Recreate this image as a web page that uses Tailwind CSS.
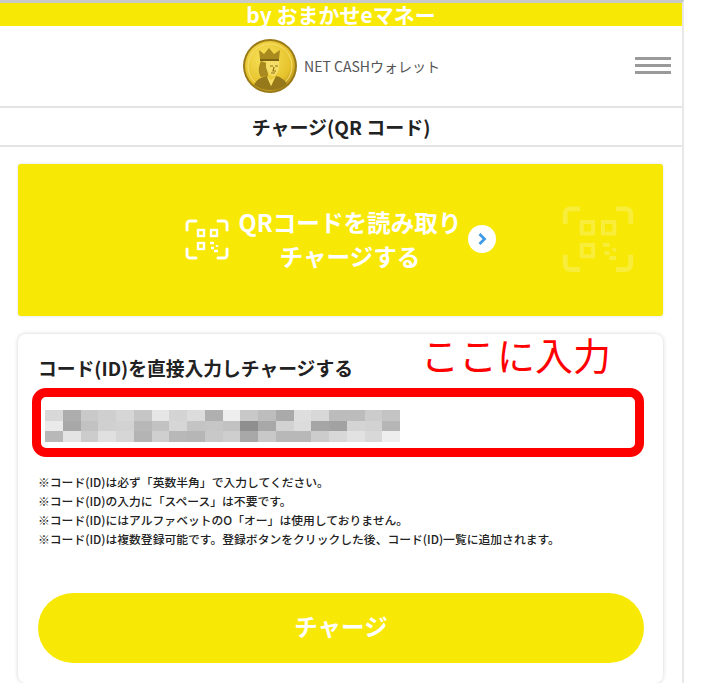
<!DOCTYPE html>
<html lang="ja">
<head>
<meta charset="utf-8">
<script src="https://cdn.jsdelivr.net/npm/@tailwindcss/browser@4"></script>
</head>
<body class="bg-white font-['Noto_Sans_CJK_JP','Noto_Sans',sans-serif] overflow-hidden">
<div class="relative w-[728px] h-[683px] overflow-hidden">
  <div class="w-[684px] h-[683px] border-r-2 border-[#e8e8e8] flex flex-col border-t-[3px] border-t-[#c8c8c8]">
    <div class="h-[23px] bg-[#f8e805] flex items-center justify-center text-white font-bold text-[21px] leading-none">by おまかせeマネー</div>
    <header class="h-[82px] flex items-center relative border-b-2 border-[#e4e4e4] shrink-0">
      <div class="flex-1 flex items-center justify-center gap-[7px] pl-[1px]">
        <svg width="54" height="54" viewBox="0 0 54 54">
          <defs><radialGradient id="g" cx="40%" cy="35%" r="70%"><stop offset="0" stop-color="#f8e35a"/><stop offset="0.75" stop-color="#e6c22c"/><stop offset="1" stop-color="#b8921c"/></radialGradient></defs>
          <circle cx="27" cy="27" r="27" fill="#9a7a18"/>
          <circle cx="27" cy="27" r="25" fill="url(#g)"/>
          <circle cx="27" cy="27" r="22" fill="none" stroke="#f6e070" stroke-width="1"/>
          <path d="M17 20 L16 11 L21 15 L26 9 L31 15 L37 11 L36 20 Z" fill="#a98a1e"/>
          <path d="M17 20 H36 V22 H17 Z" fill="#7f6512"/>
          <path d="M18 22 C15 28 15 34 18 38 L25 37 L24 24 Z" fill="#a88a20"/>
          <path d="M23 22 H36 C37 29 35 35 31 37 C27 37 24 33 23 28 Z" fill="#f5de68"/>
          <path d="M27 27 h3 M32 27 h3 M31 28 l-1 4 h3 M28 34 h4" stroke="#8d7014" stroke-width="1.1" fill="none"/>
          <path d="M11 46 C13 41 18 38 24 37 L28 47 L33 37 C38 38 42 41 44 45 C40 49 34 51 27 51 C21 51 15 49 11 46 Z" fill="#96791a"/>
          <path d="M24 38 L28 47 L32 38 L28 41 Z" fill="#f5de68"/>
        </svg>
        <span class="text-[14px] leading-none text-[#555]">NET CASHウォレット</span>
      </div>
      <div class="absolute left-[635px] top-[31px] w-[36px] flex flex-col gap-[4px]">
        <div class="h-[3px] bg-[#9a9a9a]"></div>
        <div class="h-[3px] bg-[#9a9a9a]"></div>
        <div class="h-[3px] bg-[#9a9a9a]"></div>
      </div>
    </header>
    <div class="h-[39px] flex items-center justify-center border-b-2 border-[#e4e4e4] font-bold text-[19px] leading-none text-[#222] shrink-0">チャージ(QR コード)</div>

    <main class="px-[18px] pt-[17px] pr-[19px] flex flex-col gap-[18px]">
      <div class="relative h-[152px] bg-[#f8e805] rounded-[3px] flex items-center shadow-[0_0_3px_rgba(0,0,0,0.12)] pl-[167px] overflow-hidden">
        <svg width="44" height="44" viewBox="0 0 44 44" fill="none" stroke="#fff" stroke-width="3" class="shrink-0 mt-[-1px]">
          <path d="M2 12V6a3 3 0 0 1 3-3h6M33 3h6a3 3 0 0 1 3 3v6M2 31v6a3 3 0 0 0 3 3h6M42 31v6a3 3 0 0 1-3 3h-6" stroke-linecap="round"/>
          <rect x="13" y="12" width="6" height="6" stroke-width="2.4"/>
          <rect x="26" y="12" width="6" height="6" stroke-width="2.4"/>
          <rect x="13" y="25" width="6" height="6" stroke-width="2.4"/>
          <path d="M25 25h4M32 27v2M26 30h3M29 33h4" stroke-width="2.4"/>
        </svg>
        <div class="w-[228px] ml-[7px] mt-[-3px] text-center text-white font-bold text-[23.6px] leading-[34px] shrink-0">
          <div>QRコードを読み取り</div><div>チャージする</div>
        </div>
        <div class="ml-[4px] w-[28px] h-[28px] rounded-full bg-white flex items-center justify-center shrink-0 mt-[-3px]">
          <svg width="10" height="14" viewBox="0 0 10 14" fill="none" stroke="#3f9be6" stroke-width="2.8"><path d="M2.5 2 L7.5 7 L2.5 12"/></svg>
        </div>
        <svg width="72" height="72" viewBox="0 0 44 44" fill="none" stroke="#fff" stroke-opacity="0.22" stroke-width="3" class="absolute left-[544px] top-[40px]">
          <path d="M2 12V6a3 3 0 0 1 3-3h6M33 3h6a3 3 0 0 1 3 3v6M2 31v6a3 3 0 0 0 3 3h6M42 31v6a3 3 0 0 1-3 3h-6"/>
          <rect x="12" y="11" width="7" height="7" stroke-width="2.4"/>
          <rect x="25" y="11" width="7" height="7" stroke-width="2.4"/>
          <rect x="12" y="25" width="7" height="7" stroke-width="2.4"/>
          <path d="M25 25h4M32 27v2M26 30h3M29 33h4" stroke-width="2.4"/>
        </svg>
      </div>

      <section class="relative h-[349px] bg-white rounded-[8px] shadow-[0_0_4px_rgba(0,0,0,0.18)] px-[20px] pt-[21px] flex flex-col">
        <h2 class="font-bold text-[18.8px] leading-[26px] text-[#222]">コード(ID)を直接入力しチャージする</h2>
        <div class="absolute left-[14px] top-[54px] w-[612px] h-[69px] border-[9px] border-[#ff0000] rounded-[14px] bg-white"></div>
        <div class="relative mt-[29px] ml-[7px] w-[355px] h-[32px] grid grid-cols-[repeat(20,1fr)] grid-rows-3 blur-[0.4px]">
          <div class="bg-[#d8d8d8]"></div><div class="bg-[#adadad]"></div><div class="bg-[#c9c9c9]"></div><div class="bg-[#cfcfcf]"></div><div class="bg-[#d6d6d6]"></div><div class="bg-[#c6c6c6]"></div><div class="bg-[#e6e6e6]"></div><div class="bg-[#d4d4d4]"></div><div class="bg-[#dcdcdc]"></div><div class="bg-[#b0b0b0]"></div><div class="bg-[#eeeeee]"></div><div class="bg-[#c8c8c8]"></div><div class="bg-[#bdbdbd]"></div><div class="bg-[#aaaaaa]"></div><div class="bg-[#dedede]"></div><div class="bg-[#d8d8d8]"></div><div class="bg-[#bcbcbc]"></div><div class="bg-[#bcbcbc]"></div><div class="bg-[#cccccc]"></div><div class="bg-[#c4c4c4]"></div>
          <div class="bg-[#eaeaea]"></div><div class="bg-[#a8a8a8]"></div><div class="bg-[#c2c2c2]"></div><div class="bg-[#d0d0d0]"></div><div class="bg-[#d2d2d2]"></div><div class="bg-[#b8b8b8]"></div><div class="bg-[#c2c2c2]"></div><div class="bg-[#d6d6d6]"></div><div class="bg-[#c4c4c4]"></div><div class="bg-[#c6c6c6]"></div><div class="bg-[#c2c2c2]"></div><div class="bg-[#8f8f8f]"></div><div class="bg-[#a8a8a8]"></div><div class="bg-[#d2d2d2]"></div><div class="bg-[#dcdcdc]"></div><div class="bg-[#a6a6a6]"></div><div class="bg-[#a2a2a2]"></div><div class="bg-[#d4d4d4]"></div><div class="bg-[#d2d2d2]"></div><div class="bg-[#b6b6b6]"></div>
          <div class="bg-[#b8b8b8]"></div><div class="bg-[#e4e4e4]"></div><div class="bg-[#cccccc]"></div><div class="bg-[#e0e0e0]"></div><div class="bg-[#d6d6d6]"></div><div class="bg-[#b4b4b4]"></div><div class="bg-[#cfcfcf]"></div><div class="bg-[#b8b8b8]"></div><div class="bg-[#b6b6b6]"></div><div class="bg-[#c8c8c8]"></div><div class="bg-[#cecece]"></div><div class="bg-[#a8a8a8]"></div><div class="bg-[#c8c8c8]"></div><div class="bg-[#b8b8b8]"></div><div class="bg-[#b8b8b8]"></div><div class="bg-[#cccccc]"></div><div class="bg-[#d8d8d8]"></div><div class="bg-[#e2e2e2]"></div><div class="bg-[#d8d8d8]"></div><div class="bg-[#eeeeee]"></div>
        </div>
        <ul class="relative mt-[30px] text-[11.8px] leading-[19px] text-[#222] font-medium">
          <li>※コード(ID)は必ず「英数半角」で入力してください。</li>
          <li>※コード(ID)の入力に「スペース」は不要です。</li>
          <li>※コード(ID)にはアルファベットのO「オー」は使用しておりません。</li>
          <li>※コード(ID)は複数登録可能です。登録ボタンをクリックした後、コード(ID)一覧に追加されます。</li>
        </ul>
        <button class="mt-[45px] h-[70px] w-[606px] rounded-[35px] bg-[#f8e805] text-white font-bold text-[23.5px] pb-[3px] flex items-center justify-center">チャージ</button>
      </section>
    </main>
  </div>
  <div class="absolute left-[421px] top-[331px] text-[#ff0000] text-[38px] leading-[46px] font-normal">ここに入力</div>
</div>
</body>
</html>
